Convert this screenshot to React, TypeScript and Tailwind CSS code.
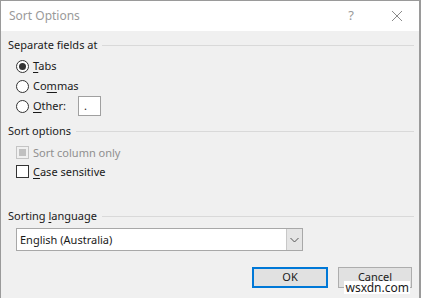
import React from "react";

const font = { fontFamily: '"Noto Sans", "Open Sans", sans-serif' };

function Header({ children, lineGap }: { children: React.ReactNode; lineGap: string }) {
  return (
    <div className="flex h-[16px] items-center">
      <span className="text-[11px] leading-[16px] text-[#1a1a1a]">{children}</span>
      <div className={`h-px flex-1 bg-[#d9d9d9] ${lineGap}`} />
    </div>
  );
}

function Radio({ checked, children }: { checked?: boolean; children: React.ReactNode }) {
  return (
    <div className="flex h-[20px] items-center pl-[8px]">
      <div className="flex h-[13px] w-[13px] items-center justify-center rounded-full border border-[#333] bg-white">
        {checked && <div className="h-[7px] w-[7px] rounded-full bg-[#333]" />}
      </div>
      <span className="ml-[4px] text-[11px] leading-[16px] text-[#1a1a1a]">{children}</span>
    </div>
  );
}

export default function App() {
  return (
    <div
      className="relative flex h-[298px] w-[421px] flex-col overflow-hidden border-l border-t border-r-2 border-[#9a9a9a] bg-[#f0f0f0]"
      style={font}
    >
      <div className="flex h-[30px] shrink-0 items-center bg-white pl-[8px]">
        <span className="text-[12px] text-[#9a9a9a]">Sort Options</span>
        <span className="ml-auto mr-[37px] text-[13px] text-[#9a9a9a]">?</span>
        <svg width="12" height="12" viewBox="0 0 12 12" className="mr-[16px]">
          <path d="M1 1 L11 11 M11 1 L1 11" stroke="#8a8a8a" strokeWidth="1" />
        </svg>
      </div>
      <div className="flex flex-1 flex-col pl-[7px] pr-[5px] pt-[6px]">
        <Header lineGap="ml-[5px]">Separate fields at</Header>
        <div className="mt-[3px] flex flex-col">
          <Radio checked>
            <span className="underline underline-offset-2">T</span>abs
          </Radio>
          <Radio>
            Co<span className="underline underline-offset-2">m</span>mas
          </Radio>
          <div className="flex h-[20px] items-center pl-[8px]">
            <div className="h-[13px] w-[13px] rounded-full border border-[#333] bg-white" />
            <span className="ml-[4px] text-[11px] leading-[16px] text-[#1a1a1a]">
              <span className="underline underline-offset-2">O</span>ther:
            </span>
            <div className="ml-[12px] flex h-[20px] w-[23px] items-center border border-[#a0a0a0] bg-white pl-[5px] text-[11px] leading-[16px] text-[#1a1a1a]">
              .
            </div>
          </div>
        </div>
        <div className="mt-[7px]">
          <Header lineGap="ml-[5px]">Sort options</Header>
        </div>
        <div className="mt-[4px] flex h-[19px] items-center pl-[8px]">
          <div className="flex h-[13px] w-[13px] items-center justify-center border border-[#c4c4c4] bg-[#f0f0f0]">
            <div className="h-[7px] w-[7px] bg-[#c0c0c0]" />
          </div>
          <span className="ml-[4px] text-[11px] leading-[16px] text-[#8f8f8f]">Sort column only</span>
        </div>
        <div className="flex h-[19px] items-center pl-[8px]">
          <div className="h-[13px] w-[13px] border border-[#333] bg-white" />
          <span className="ml-[4px] text-[11px] leading-[16px] text-[#1a1a1a]">
            <span className="underline underline-offset-2">C</span>ase sensitive
          </span>
        </div>
        <div className="mt-[27px]">
          <Header lineGap="ml-[5px]">
            Sorting <span className="underline underline-offset-2">l</span>anguage
          </Header>
        </div>
        <div className="ml-[8px] mt-[4px] flex h-[23px] w-[287px] items-stretch border border-[#a8a8a8] bg-white">
          <span className="flex flex-1 items-center pl-[3px] text-[11px] leading-[16px] text-[#1a1a1a]">
            English (Australia)
          </span>
          <div className="flex w-[16px] items-center justify-center border-l border-[#c8c8c8] bg-[#e5e5e5]">
            <svg width="9" height="6" viewBox="0 0 9 6">
              <path d="M0.5 1 L4.5 5 L8.5 1" fill="none" stroke="#555" strokeWidth="1" />
            </svg>
          </div>
        </div>
        <div className="mt-[16px] flex justify-end gap-[10px] pr-[2px]">
          <div className="flex h-[21px] w-[76px] items-center justify-center border-2 border-[#0078d7] bg-[#e1e1e1] text-[11px] text-[#1a1a1a]">
            OK
          </div>
          <div className="flex h-[21px] w-[74px] items-start justify-center border border-[#adadad] bg-[#e1e1e1] pt-[1px] text-[11px] leading-[15px] text-[#1a1a1a]">
            Cancel
          </div>
        </div>
      </div>
      <span className="absolute bottom-[4px] right-[9px] bg-white px-[1px] text-[12px] leading-[13px] text-[#1a1a1a]">
        wsxdn.com
      </span>
    </div>
  );
}
